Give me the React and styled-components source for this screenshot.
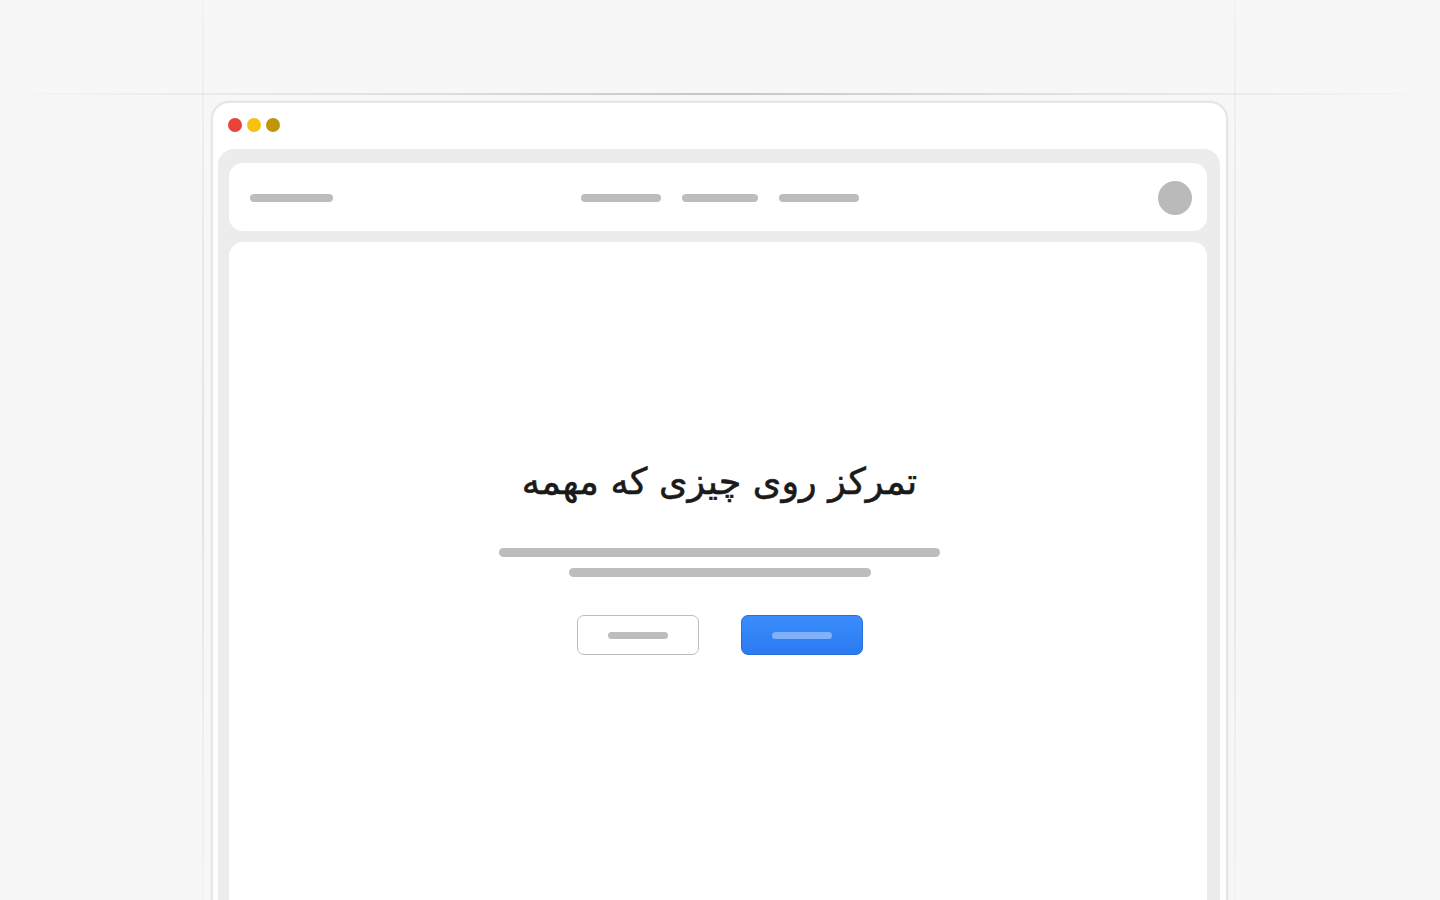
import React from 'react'
import styled, { createGlobalStyle } from 'styled-components'

const GlobalStyle = createGlobalStyle`
  html, body {
    margin: 0;
    padding: 0;
    background: #f7f7f7;
    font-family: "DejaVu Sans", "Noto Sans", sans-serif;
  }
`

const Page = styled.div`
  position: relative;
  width: 1440px;
  height: 900px;
  overflow: hidden;
  padding-top: 101px;
  box-sizing: border-box;
`

const GuideV = styled.div`
  position: absolute;
  top: 0;
  bottom: 0;
  left: ${p => p.x}px;
  width: 2px;
  background: linear-gradient(
    to bottom,
    rgba(0, 0, 0, 0.02) 0%,
    rgba(0, 0, 0, 0.06) 30%,
    rgba(0, 0, 0, 0.08) 55%,
    rgba(0, 0, 0, 0.03) 85%,
    rgba(0, 0, 0, 0.02) 100%
  );
`

const GuideH = styled.div`
  position: absolute;
  left: 0;
  right: 0;
  top: 93px;
  height: 2px;
  background: linear-gradient(
    to right,
    rgba(0, 0, 0, 0) 0%,
    rgba(0, 0, 0, 0.04) 10%,
    rgba(0, 0, 0, 0.1) 30%,
    rgba(0, 0, 0, 0.2) 50%,
    rgba(0, 0, 0, 0.1) 70%,
    rgba(0, 0, 0, 0.04) 90%,
    rgba(0, 0, 0, 0) 100%
  );
`

const Window = styled.div`
  position: relative;
  width: 1017px;
  margin-left: 211px;
  height: 840px;
  box-sizing: border-box;
  background: #fff;
  border: 2px solid #e6e6e6;
  border-radius: 18px;
  padding: 0 6px 0 5px;
  box-shadow: 0 0 0 1px rgba(0, 0, 0, 0.02);
`

const TitleBar = styled.div`
  height: 46px;
  box-sizing: border-box;
  padding: 0 10px 2px;
  display: flex;
  align-items: center;
  gap: 5px;
`

const Dot = styled.span`
  width: 14px;
  height: 14px;
  border-radius: 50%;
  background: ${p => p.color};
`

const Frame = styled.div`
  background: #ececec;
  border-radius: 16px 16px 0 0;
  padding: 14px 13px 0 11px;
  height: 800px;
`

const Header = styled.header`
  height: 68px;
  box-sizing: border-box;
  background: #fff;
  border-radius: 14px;
  display: grid;
  grid-template-columns: 1fr auto 1fr;
  align-items: center;
  padding: 2px 15px 0 21px;
`

const Bar = styled.span`
  display: block;
  width: ${p => p.w}px;
  height: ${p => p.h || 8}px;
  border-radius: 5px;
  background: ${p => p.color || '#bdbdbd'};
`

const Nav = styled.nav`
  display: flex;
  gap: 21px;
  margin-left: -2px;
`

const Avatar = styled.span`
  justify-self: end;
  width: 34px;
  height: 34px;
  border-radius: 50%;
  background: #bababa;
`

const Main = styled.main`
  margin-top: 11px;
  background: #fff;
  border-radius: 14px 14px 0 0;
  height: 760px;
  display: flex;
  flex-direction: column;
  align-items: center;
  padding: 216px 0 0 3px;
  box-sizing: border-box;
`

const Title = styled.h1`
  margin: 0;
  font-size: 36.5px;
  font-weight: 400;
  -webkit-text-stroke: 0.6px #1a1a1a;
  color: #1a1a1a;
  line-height: 1.3;
  direction: rtl;
`

const Lines = styled.div`
  margin-top: 43px;
  display: flex;
  flex-direction: column;
  align-items: center;
  gap: 11px;
`

const Actions = styled.div`
  margin-top: 38px;
  display: flex;
  gap: 42px;
`

const Button = styled.div`
  width: 122px;
  height: 40px;
  box-sizing: border-box;
  border-radius: 7px;
  display: flex;
  align-items: center;
  justify-content: center;
  border: 1px solid ${p => (p.primary ? '#2a70dc' : '#bdbdbd')};
  background: ${p => (p.primary ? 'linear-gradient(#3a8cfb, #2c7af2)' : '#fff')};
`

export default function App() {
  return (
    <>
      <GlobalStyle />
      <Page>
        <GuideV x={202} />
        <GuideV x={1234} />
        <GuideH />
        <Window>
          <TitleBar>
            <Dot color="#e8433a" />
            <Dot color="#f4c20f" />
            <Dot color="#bf960a" />
          </TitleBar>
          <Frame>
            <Header>
              <Bar w={83} />
              <Nav>
                <Bar w={80} />
                <Bar w={76} />
                <Bar w={80} />
              </Nav>
              <Avatar />
            </Header>
            <Main>
              <Title>تمرکز روی چیزی که مهمه</Title>
              <Lines>
                <Bar w={441} h={9} />
                <Bar w={302} h={9} />
              </Lines>
              <Actions>
                <Button>
                  <Bar w={60} h={7} />
                </Button>
                <Button primary>
                  <Bar w={60} h={7} color="#80b2fb" />
                </Button>
              </Actions>
            </Main>
          </Frame>
        </Window>
      </Page>
    </>
  )
}
